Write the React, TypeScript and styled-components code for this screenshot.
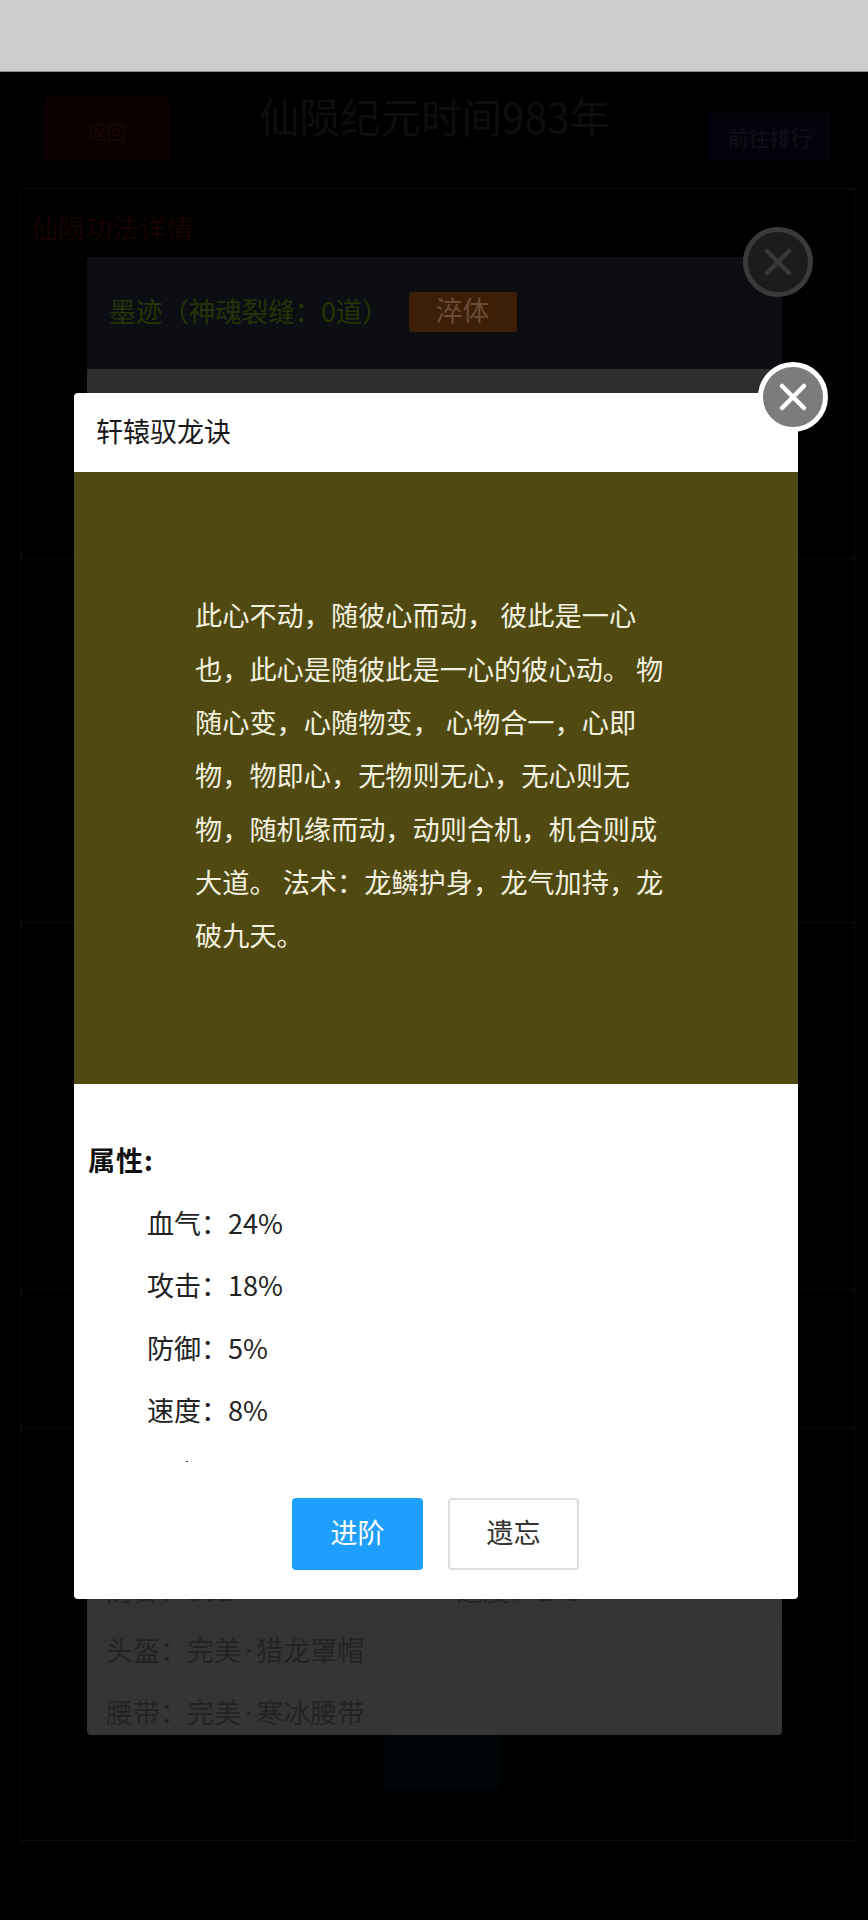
import styled, { createGlobalStyle } from "styled-components";

const GlobalStyle = createGlobalStyle`
  html, body {
    margin: 0;
    padding: 0;
    background: #000;
  }
  * {
    box-sizing: border-box;
  }
  body {
    font-family: "Noto Sans CJK SC", "Noto Sans", sans-serif;
  }
`;

const attrs = [
  ["血气", "24%"],
  ["攻击", "18%"],
  ["防御", "5%"],
  ["速度", "8%"],
];

const sections = [370, 364, 367, 139, 411];

function CloseIcon({ color }: { color: string }) {
  return (
    <svg width="34" height="34" viewBox="0 0 34 34" fill="none">
      <path d="M6 6L28 28M28 6L6 28" stroke={color} strokeWidth="4.5" strokeLinecap="round" />
    </svg>
  );
}

export default function App() {
  return (
    <Page>
      <GlobalStyle />
      <StatusBar />
      <Header>
        <BackButton>返回</BackButton>
        <Title>仙陨纪元时间983年</Title>
        <RankButton>前往排行</RankButton>
      </Header>
      <Panel>
        {sections.map((h, i) => (
          <Section key={i} $height={h}>
            {i === 0 && <SectionTitle>仙陨功法详情</SectionTitle>}
          </Section>
        ))}
      </Panel>
      <GlowButton />

      <Dialog>
        <DialogTop>
          <InkLabel>墨迹（神魂裂缝：0道）</InkLabel>
          <TemperButton>淬体</TemperButton>
        </DialogTop>
        <DialogBody>
          <GearPair>
            <GearRow>防御：361</GearRow>
            <GearRow>速度：145</GearRow>
          </GearPair>
          <GearRow>
            头盔：完美<GearDot>·</GearDot>猎龙罩帽
          </GearRow>
          <GearRow>
            腰带：完美<GearDot>·</GearDot>寒冰腰带
          </GearRow>
        </DialogBody>
        <BackClose>
          <CloseIcon color="#383838" />
        </BackClose>
      </Dialog>

      <Modal>
        <ModalHead>轩辕驭龙诀</ModalHead>
        <Lore>
          <LoreText>
            此心不动，随彼心而动， 彼此是一心也，此心是随彼此是一心的彼心动。 物随心变，心随物变， 心物合一，心即物，物即心，无物则无心，无心则无物，随机缘而动，动则合机，机合则成大道。 法术：龙鳞护身，龙气加持，龙破九天。
          </LoreText>
        </Lore>
        <AttrArea>
          <AttrTitle>属性:</AttrTitle>
          {attrs.map(([name, value]) => (
            <AttrRow key={name}>
              {name}：{value}
            </AttrRow>
          ))}
          <CutDot />
        </AttrArea>
        <ModalFoot>
          <PrimaryButton>进阶</PrimaryButton>
          <PlainButton>遗忘</PlainButton>
        </ModalFoot>
        <FrontClose>
          <CloseIcon color="#ffffff" />
        </FrontClose>
      </Modal>
    </Page>
  );
}

const Page = styled.div`
  position: relative;
  height: 1920px;
  overflow: hidden;
  background: #000;
`;

const StatusBar = styled.div`
  height: 72px;
  background: #cdcdcd;
  border-bottom: 1px solid #8a8a8a;
`;

const Header = styled.div`
  height: 116px;
  padding: 25px 38px 0 43px;
  display: flex;
  justify-content: space-between;
  align-items: flex-start;
`;

const BackButton = styled.div`
  width: 127px;
  height: 63px;
  background: #0b0000;
  color: #1a0707;
  font-size: 19px;
  padding-top: 6px;
  display: flex;
  align-items: center;
  justify-content: center;
`;

const Title = styled.div`
  margin: -5px 10px 0 0;
  color: #0e0e0e;
  font-size: 40.5px;
  line-height: 48px;
`;

const RankButton = styled.div`
  width: 121px;
  height: 47px;
  margin-top: 16px;
  background: #03030b;
  color: #101018;
  font-size: 21px;
  display: flex;
  align-items: center;
  justify-content: center;
`;

const Panel = styled.div`
  margin: 0 13px 0 20px;
  border: 1px solid #0c0c0c;
`;

const Section = styled.div<{ $height: number }>`
  height: ${(p) => p.$height}px;
  padding: 21px 10px;
  border-bottom: 1px solid #0a0a0a;
  &:last-child {
    border-bottom: 0;
  }
`;

const SectionTitle = styled.div`
  color: #150401;
  font-size: 27px;
  line-height: 36px;
`;

const GlowButton = styled.div`
  position: absolute;
  left: 385px;
  top: 1735px;
  width: 115px;
  height: 55px;
  background: #000607;
`;

const Dialog = styled.div`
  position: absolute;
  left: 87px;
  top: 257px;
  width: 695px;
  height: 1478px;
  display: flex;
  flex-direction: column;
  border-radius: 4px;
`;

const DialogTop = styled.div`
  height: 112px;
  padding: 35px 22px 0;
  background: #0c0e13;
  display: flex;
  align-items: flex-start;
  gap: 20px;
  border-radius: 4px 4px 0 0;
`;

const InkLabel = styled.div`
  color: #243408;
  font-size: 27px;
  line-height: 38px;
  letter-spacing: -0.5px;
`;

const TemperButton = styled.div`
  width: 108px;
  height: 40px;
  background: #3d1e06;
  color: #6b4c38;
  font-size: 27px;
  line-height: 36px;
  text-align: center;
  border-radius: 3px;
`;

const DialogBody = styled.div`
  flex: 1;
  padding: 1190px 18px 0 19px;
  background: linear-gradient(#2e2e2e, #353535);
  overflow: hidden;
  border-radius: 0 0 4px 4px;
`;

const GearPair = styled.div`
  height: 60px;
  display: grid;
  grid-template-columns: 350px 1fr;
`;

const GearRow = styled.div`
  height: 62px;
  line-height: 62px;
  font-size: 27px;
  color: #232323;
`;

const GearDot = styled.span`
  font-family: "Noto Sans", sans-serif;
  padding: 0 4px;
`;

const BackClose = styled.div`
  position: absolute;
  right: -31px;
  top: -30px;
  width: 70px;
  height: 70px;
  border-radius: 50%;
  border: 5px solid #3a3a3a;
  background: #1c1c1c;
  display: flex;
  align-items: center;
  justify-content: center;
`;

const Modal = styled.div`
  position: absolute;
  left: 74px;
  top: 393px;
  width: 724px;
  height: 1206px;
  background: #fff;
  border-radius: 4px;
  display: flex;
  flex-direction: column;
`;

const ModalHead = styled.div`
  height: 79px;
  padding-left: 22px;
  color: #1a1a1a;
  font-size: 27px;
  line-height: 76px;
`;

const Lore = styled.div`
  height: 612px;
  padding: 0 125px 6px 121px;
  background: #504a12;
  display: flex;
  align-items: center;
`;

const LoreText = styled.div`
  color: #f2f0de;
  font-size: 27.2px;
  line-height: 53.3px;
`;

const AttrArea = styled.div`
  height: 378px;
  padding: 45px 14px 0;
  overflow: hidden;
`;

const AttrTitle = styled.div`
  height: 63px;
  line-height: 62px;
  font-size: 27px;
  font-weight: 700;
  letter-spacing: 1px;
  color: #111;
`;

const AttrRow = styled.div`
  height: 62.4px;
  line-height: 62px;
  padding-left: 59px;
  font-size: 27px;
  color: #222;
`;

const CutDot = styled.div`
  width: 2px;
  height: 2px;
  margin: 19px 0 0 98px;
  background: #333;
`;

const ModalFoot = styled.div`
  flex: 1;
  padding: 36px 1px 0 0;
  display: flex;
  justify-content: center;
  gap: 25px;
`;

const PrimaryButton = styled.div`
  width: 131px;
  height: 72px;
  background: #1e9fff;
  color: #fff;
  font-size: 27px;
  line-height: 67px;
  text-align: center;
  border-radius: 4px;
`;

const PlainButton = styled.div`
  width: 131px;
  height: 72px;
  background: #fff;
  border: 2px solid #dedede;
  color: #333;
  font-size: 27px;
  line-height: 63px;
  text-align: center;
  border-radius: 4px;
`;

const FrontClose = styled.div`
  position: absolute;
  right: -30px;
  top: -31px;
  width: 70px;
  height: 70px;
  border-radius: 50%;
  border: 5px solid #fff;
  background: #7c7c7c;
  display: flex;
  align-items: center;
  justify-content: center;
`;
